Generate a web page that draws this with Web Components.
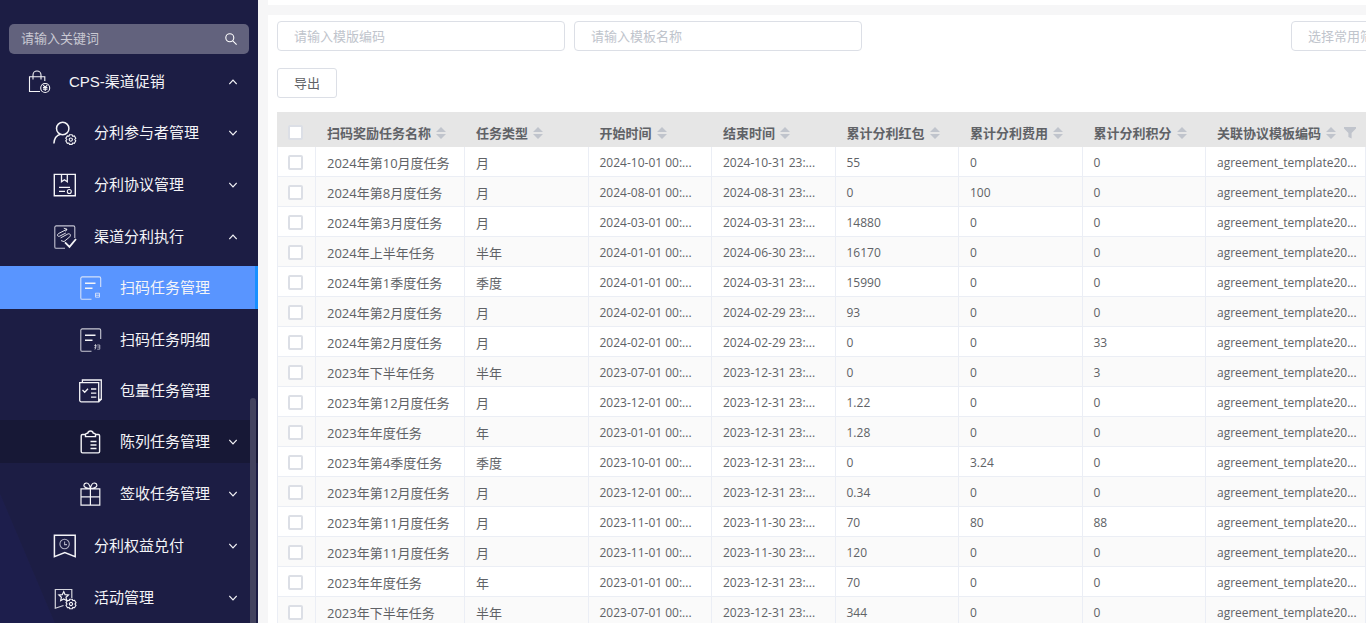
<!DOCTYPE html>
<html lang="zh-CN">
<head>
<meta charset="utf-8">
<title>扫码任务管理</title>
<style>
html, body { margin: 0; height: 100%; }
body { font: 13px/20px "Open Sans", "Noto Sans CJK SC", sans-serif; color: #606266; background: #f6f6f7; overflow: hidden; }
</style>
</head>
<body>
<app-shell>
  <side-menu slot="side">
    <nav-item icon="bag" level="1" arrow="up">CPS-渠道促销</nav-item>
    <nav-item icon="user" level="2" arrow="down">分利参与者管理</nav-item>
    <nav-item icon="protocol" level="2" arrow="down">分利协议管理</nav-item>
    <nav-item icon="execute" level="2" arrow="up">渠道分利执行</nav-item>
    <nav-item icon="scan" level="3" active>扫码任务管理</nav-item>
    <nav-item icon="scandetail" level="3">扫码任务明细</nav-item>
    <nav-item icon="pack" level="3">包量任务管理</nav-item>
    <nav-item icon="clipboard" level="3" arrow="down" hovered>陈列任务管理</nav-item>
    <nav-item icon="gift" level="3" arrow="down">签收任务管理</nav-item>
    <nav-item icon="benefit" level="2" arrow="down">分利权益兑付</nav-item>
    <nav-item icon="activity" level="2" arrow="down">活动管理</nav-item>
  </side-menu>
  <filter-bar></filter-bar>
  <tool-button>导出</tool-button>
  <task-table></task-table>
</app-shell>

<script>
const define = (name, html, setup) => customElements.define(name, class extends HTMLElement {
  constructor() {
    super();
    this.attachShadow({ mode: 'open' });
  }
  connectedCallback() {
    const t = document.createElement('template');
    t.innerHTML = typeof html === 'function' ? html(this) : html;
    this.shadowRoot.replaceChildren(t.content.cloneNode(true));
    if (setup) setup(this);
  }
});

define('app-shell', `
<style>
:host { display: flex; height: 100vh; overflow: hidden; }
main { flex: 1; min-width: 0; margin-left: 10px; display: flex; flex-direction: column; gap: 10px; }
.tabs { height: 5px; flex: none; background: #fff; }
.panel { flex: 1; min-height: 0; background: #fff; padding: 6px 0 0 9px; overflow: hidden; }
</style>
<slot name="side"></slot>
<main><div class="tabs"></div><section class="panel"><slot></slot></section></main>`);

define('side-menu', `
<style>
:host { display: block; box-sizing: border-box; width: 258px; flex: none; padding-top: 24px; overflow: hidden; position: relative;
  background: linear-gradient(67deg, #1d1e4c 0 50px, transparent 51px) left bottom / 56px 132px no-repeat, #1c1d44; }
label { display: flex; align-items: center; box-sizing: border-box; height: 30px; margin: 0 9px 6px; padding: 0 12px; background: #62627d; border-radius: 5px; }
input { flex: 1; min-width: 0; border: 0; padding: 0; background: none; outline: 0; font: 13px/20px "Liberation Sans", "Noto Sans CJK SC", sans-serif; color: #fff; }
input::placeholder { color: #c9c9d3; opacity: 1; }
.thumb { position: absolute; right: 2px; top: 398px; bottom: 0; width: 6px; border-radius: 3px 3px 0 0; background: #43435f; }
</style>
<label><input type="text" placeholder="请输入关键词" aria-label="请输入关键词">
<svg width="12" height="12" viewBox="0 0 12 12" fill="none" stroke="#fff" stroke-width="1.1"><circle cx="4.8" cy="4.8" r="4"/><path d="M7.8 7.8 11.6 11.6"/></svg></label>
<nav><slot></slot></nav>
<div class="thumb"></div>`);

const gear = (x, y, s) => `<g transform="translate(${x} ${y}) scale(${s})"><path d="M-1.3-4.8H1.3L1.8-3.4 3.5-3.7 5-1.3 4 0 5 1.3 3.5 3.7 1.8 3.4 1.3 4.8H-1.3L-1.8 3.4-3.5 3.7-5 1.3-4 0-5-1.3-3.5-3.7-1.8-3.4Z"/><circle r="1.6"/></g>`;
const icons = {
  bag: `<path d="M16.8 11V6.7H1.5V21.5H12M5 9.5V5a4 4 0 0 1 8 0V9.5"/><circle cx="17.2" cy="18" r="4.5"/><path d="M15.2 15 17.2 17.4 19.2 15M17.2 17.4V21M15 17.6H19.4M15 19.3H19.4"/>`,
  user: `<g stroke-width="1.5"><circle cx="9.7" cy="7.5" r="6.2"/><path d="M.9 22.5C1.2 17.5 3.5 14.3 7.6 13.3"/></g>${gear(17.8, 18.6, 1)}`,
  protocol: `<path stroke-width="1.4" d="M1.3 1.4H22.3V22.8H1.3Z"/><path stroke-width="1.3" d="M8.5 1.4V8.8L11.4 6.7 14.3 8.8V1.4M6 14.4H17M6 18.4H12"/><circle cx="16.3" cy="18.5" r="2"/>`,
  execute: `<path stroke="#c4c4d2" d="M12 23.3H3.2a1.4 1.4 0 0 1-1.4-1.4V2.3A1.4 1.4 0 0 1 3.2.9H20.4a1.4 1.4 0 0 1 1.4 1.4V13"/><path stroke-width=".9" d="M10.8 3.2 14 4.2 5.6 8.5C3.8 9.6 4.3 12 6.6 11.2L12.8 8M8 15.6 11 16.6 16.8 11.8C18.3 10.3 17 8 14.8 9L7.6 12.9M14 4.2 12.6 6.4"/><path stroke-width="1.8" d="m12 17.3 4.5 4.6L23 14"/>`,
  scan: `<path stroke="currentColor" stroke-opacity=".8" d="M12.5 23.3H3.2a1.4 1.4 0 0 1-1.4-1.4V2.3A1.4 1.4 0 0 1 3.2.9H20.3a1.4 1.4 0 0 1 1.4 1.4V11"/><path stroke-width="1.6" d="M6 7.2H16.5M6 12.3H13.5"/><path stroke-width=".9" opacity=".8" d="M16.5 17.2H20.5V21.2H16.5ZM16.5 19.2H20.5"/>`,
  scandetail: `<path stroke-opacity=".8" d="M12.5 23.3H3.2a1.4 1.4 0 0 1-1.4-1.4V2.3A1.4 1.4 0 0 1 3.2.9H20.3a1.4 1.4 0 0 1 1.4 1.4V11"/><path stroke-width="1.6" d="M6 7.2H16.5M6 12.3H13.5"/><path stroke-width=".8" opacity=".75" d="M15.2 17.5H17.7M16.5 16V21L15.4 21.1M15.3 19.5 17.7 18.8M18.2 17H20.8V21.2H18.2M18.4 19H20.8"/>`,
  pack: `<path stroke-width="1.3" d="M.7 3.7H19.7V22.8H2.2A1.5 1.5 0 0 1 .7 21.3ZM3.4 3.5V1H22.3V20.3H20M19.7 22.8 22.3 20.3M12 10H17.3M12 14.2H17.3M12 18.2H17.3M3.5 11 5.7 13.2 9 9.8"/>`,
  clipboard: `<path stroke-width="1.4" d="M6.5 4.5H3.5A1.3 1.3 0 0 0 2.2 5.8V21.6A1.3 1.3 0 0 0 3.5 22.9H19.3A1.3 1.3 0 0 0 20.6 21.6V5.8A1.3 1.3 0 0 0 19.3 4.5H16.5M6.5 6.6V4.3C6.5 3.3 8 3.3 8.8 3.1 9.3.3 13.7.3 14.2 3.1 15 3.3 16.5 3.3 16.5 4.3V6.6ZM11.5 11.5H17.5M11.5 15H17.5M11.5 18.5H17.5"/>`,
  gift: `<path stroke-width="1.2" d="M2 6.8H20.8V23.2H2ZM2 14.8H20.8M11.4 6.8V23.2M11.4 6.6C8 6.5 4.8 5.3 4.9 3.2 5.1.7 8.6.2 10 2.5 11 4 11.4 6.6 11.4 6.6S11.8 4 12.8 2.5C14.2.2 17.7.7 17.9 3.2 18 5.3 14.8 6.5 11.4 6.6Z"/>`,
  benefit: `<path stroke-width="1.5" d="M1.4 1.3H22.2V22.6L11.8 18.6 1.4 22.6Z"/><g stroke="#b0b0c2"><circle cx="11.6" cy="10" r="4.7"/><path d="M11.6 7.5V10.6H14"/></g>`,
  activity: `<path stroke-opacity=".85" stroke-width="1.2" d="M18.8 12V3.5H2.3V22.2L10.5 19.5"/><path stroke-width="1.2" d="M10.7 5.6 12.1 8.7 15.5 9 13 11.3 13.7 14.7 10.7 13 7.7 14.7 8.4 11.3 5.9 9 9.3 8.7Z"/>${gear(18, 18, 1)}`
};
const pads = { 1: 28, 2: 53, 3: 79 };

define('nav-item', el => `
<style>
:host { display: block; margin-bottom: 9px; }
:host([level="3"]:not([active]):not([arrow])), :host([arrow="up"]) { margin-bottom: 8px; }
a { display: flex; align-items: center; gap: 17px; box-sizing: border-box; height: 43px; padding: 0 21px 0 ${pads[el.getAttribute('level')]}px; color: #f4f4f7; text-decoration: none; font: 15px/24px "Liberation Sans", "Noto Sans CJK SC", sans-serif; white-space: nowrap; }
:host([active]) a { background: #5995ff; border-right: 3px solid #1890ff; }
:host([hovered]) a { background: #171836; }
span { flex: 1; }
svg { flex: none; }
</style>
<a href="#"><svg width="24" height="24" viewBox="0 0 24 24" fill="none" stroke="currentColor" stroke-width="1.1">${icons[el.getAttribute('icon')]}</svg>
<span><slot></slot></span>
${el.hasAttribute('arrow') ? `<svg width="8" height="6" viewBox="0 0 8 6" fill="none" stroke="currentColor" stroke-width="1.2"><path d="${el.getAttribute('arrow') === 'up' ? 'M.3 5 4 1.2 7.7 5' : 'M.3 1 4 4.8 7.7 1'}"/></svg>` : ''}</a>`);

define('filter-bar', `
<style>
:host { display: flex; gap: 9px; margin-bottom: 17px; }
input, select { box-sizing: border-box; width: 288px; height: 30px; padding: 0 16px; border: 1px solid #dcdfe6; border-radius: 4px; background: #fff; font: 13px/20px "Open Sans", "Noto Sans CJK SC", sans-serif; color: #606266; outline: 0; }
input::placeholder { color: #c0c4cc; opacity: 1; }
.saved { margin-left: auto; width: 75px; overflow: hidden; }
select { appearance: none; width: 160px; color: #c0c4cc; }
</style>
<input type="text" placeholder="请输入模版编码" aria-label="模版编码">
<input type="text" placeholder="请输入模板名称" aria-label="模板名称">
<div class="saved"><select aria-label="常用筛选"><option>选择常用筛选</option></select></div>`);

define('tool-button', `
<style>
:host { display: block; margin-bottom: 14px; }
button { display: block; box-sizing: border-box; width: 60px; height: 30px; padding: 0; border: 1px solid #dcdfe6; border-radius: 3px; background: #fff; color: #606266; font: 13px/20px "Open Sans", "Noto Sans CJK SC", sans-serif; }
</style>
<button type="button"><slot></slot></button>`);

define('sort-carets', `
<style>
:host { display: inline-block; width: 10px; height: 12px; margin-left: 5px; }
svg { display: block; }
</style>
<svg width="10" height="12" viewBox="0 0 10 12" fill="#c0c4cc"><path d="M0 5 5 0 10 5ZM0 7H10L5 12Z"/></svg>`);

const heads = ['扫码奖励任务名称', '任务类型', '开始时间', '结束时间', '累计分利红包', '累计分利费用', '累计分利积分', '关联协议模板编码'];
const rows = `2024年第10月度任务|月|2024-10-01|2024-10-31|55|0|0
2024年第8月度任务|月|2024-08-01|2024-08-31|0|100|0
2024年第3月度任务|月|2024-03-01|2024-03-31|14880|0|0
2024年上半年任务|半年|2024-01-01|2024-06-30|16170|0|0
2024年第1季度任务|季度|2024-01-01|2024-03-31|15990|0|0
2024年第2月度任务|月|2024-02-01|2024-02-29|93|0|0
2024年第2月度任务|月|2024-02-01|2024-02-29|0|0|33
2023年下半年任务|半年|2023-07-01|2023-12-31|0|0|3
2023年第12月度任务|月|2023-12-01|2023-12-31|1.22|0|0
2023年年度任务|年|2023-01-01|2023-12-31|1.28|0|0
2023年第4季度任务|季度|2023-10-01|2023-12-31|0|3.24|0
2023年第12月度任务|月|2023-12-01|2023-12-31|0.34|0|0
2023年第11月度任务|月|2023-11-01|2023-11-30|70|80|88
2023年第11月度任务|月|2023-11-01|2023-11-30|120|0|0
2023年年度任务|年|2023-01-01|2023-12-31|70|0|0
2023年下半年任务|半年|2023-07-01|2023-12-31|344|0|0`.split('\n').map(r => r.split('|'));

define('task-table', () => `
<style>
:host { display: block; }
table { width: 100%; table-layout: fixed; border-collapse: separate; border-spacing: 0; }
.c-check { width: 39px; } .c-name { width: 149px; } .c-code { width: 160px; }
th { height: 35px; box-sizing: border-box; padding: 6px 0 0 11px; background: #e6e6e6; text-align: left; font-weight: 700; white-space: nowrap; }
th > div { display: flex; align-items: center; }
td { height: 30px; box-sizing: border-box; padding: 2px 0 0 11px; border-right: 1px solid #ebeef5; border-bottom: 1px solid #ebeef5; white-space: nowrap; }
td:first-child { border-left: 1px solid #ebeef5; padding-left: 10px; }
td.num { font-size: 12px; }
tbody tr:nth-child(even) { background: #fafafa; }
input { appearance: none; display: block; box-sizing: border-box; width: 15px; height: 15px; margin: 0; border: 2px solid #dcdfe6; border-radius: 2px; background: #fff; }
svg { margin-left: 8px; }
</style>
<table>
<colgroup><col class="c-check"><col class="c-name"><col span="6"><col class="c-code"></colgroup>
<thead><tr><th><input type="checkbox" aria-label="全选"></th>${heads.map((h, i) => `<th><div>${h}<sort-carets></sort-carets>${i === 7 ? '<svg width="12" height="12" viewBox="0 0 12 12" fill="#c0c4cc"><path d="M0 0H12V1.6L7.6 6V11.5L4.4 10V6L0 1.6Z"/></svg>' : ''}</div></th>`).join('')}</tr></thead>
<tbody>${rows.map(r => `<tr><td><input type="checkbox" aria-label="${r[0]}"></td><td>${r[0]}</td><td>${r[1]}</td><td class="num">${r[2]} 00:...</td><td class="num">${r[3]} 23:...</td><td class="num">${r[4]}</td><td class="num">${r[5]}</td><td class="num">${r[6]}</td><td class="num">agreement_template20...</td></tr>`).join('')}</tbody>
</table>`);
</script>
</body>
</html>
